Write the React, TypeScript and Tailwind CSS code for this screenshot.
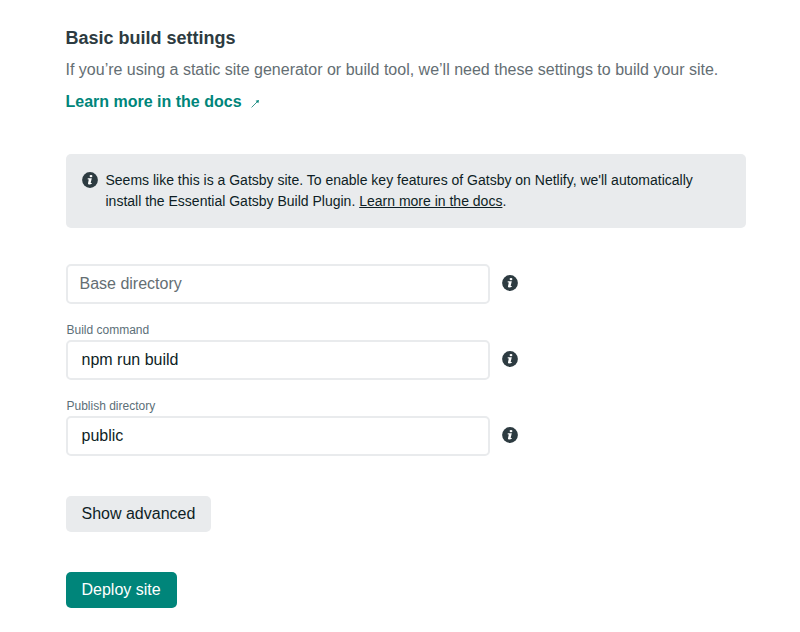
function Info({ className }: { className?: string }) {
  return (
    <svg viewBox="0 0 16 16" className={`block h-4 w-4 shrink-0 ${className ?? ""}`}>
      <circle cx="8" cy="8" r="7.9" fill="#2d3b41" />
      <ellipse cx="9" cy="4.1" rx="1.4" ry="1.2" fill="#fff" />
      <path fill="#fff" d="M5.8 6.2h4L8.7 10.8c0 .3.4.3 1.2.1l-.2.9c-1.6 1-3.9.9-3.7-.6l.8-3.7-1.2-.2z" />
    </svg>
  );
}

function Field({ label, value }: { label?: string; value: string }) {
  return (
    <div>
      {label && <div className="mb-[2px] h-4 pl-px text-xs leading-4 text-[#5c6f78]">{label}</div>}
      <div className="flex items-center">
        <div
          className={`flex h-10 w-[424px] items-center rounded-[5px] border-2 border-[#e9ebed] ${
            label ? "pl-[14px] text-[#0e1e25]" : "pl-3 text-[#646e73]"
          }`}
        >
          {value}
        </div>
        <Info className="mb-[2px] ml-3" />
      </div>
    </div>
  );
}

export default function App() {
  return (
    <main className="h-[632px] w-[800px] overflow-hidden bg-white pl-[65.5px] pt-[26px] font-['Liberation_Sans',Arial,sans-serif] text-base leading-6 text-[#0e1e25]">
      <h2 className="text-lg font-bold leading-6 text-[#2d3b41]">Basic build settings</h2>
      <p className="mt-2 text-[#646e73]">
        If you’re using a static site generator or build tool, we’ll need these settings to build your site.
      </p>
      <a className="mt-2 flex items-center font-bold text-[#00857a]">
        Learn more in the docs
        <svg viewBox="0 0 8 8" className="ml-[9.5px] mt-[3px] h-2 w-2" fill="#00857a">
          <path d="M.6 7.4 6 2" stroke="#2f9188" strokeWidth=".95" />
          <path d="M8 0 7.3 3.3 4.6.8z" />
        </svg>
      </a>
      <div className="mt-10 flex h-[74px] w-[680px] rounded-[5px] bg-[#e9ebed] pl-4 pt-4 text-sm leading-[21px]">
        <Info className="mt-[2px]" />
        <p className="ml-2">
          Seems like this is a Gatsby site. To enable key features of Gatsby on Netlify, we'll automatically
          <br />
          install the Essential Gatsby Build Plugin. <a className="underline">Learn more in the docs</a>.
        </p>
      </div>
      <div className="mt-9 flex flex-col gap-[18px]">
        <Field value="Base directory" />
        <Field label="Build command" value="npm run build" />
        <Field label="Publish directory" value="public" />
      </div>
      <button className="mt-10 block h-9 rounded-[5px] bg-[#e9ebed] px-4 pb-px">Show advanced</button>
      <button className="mt-10 block h-9 rounded-[5px] bg-[#00857a] px-4 pb-px text-white">Deploy site</button>
    </main>
  );
}
